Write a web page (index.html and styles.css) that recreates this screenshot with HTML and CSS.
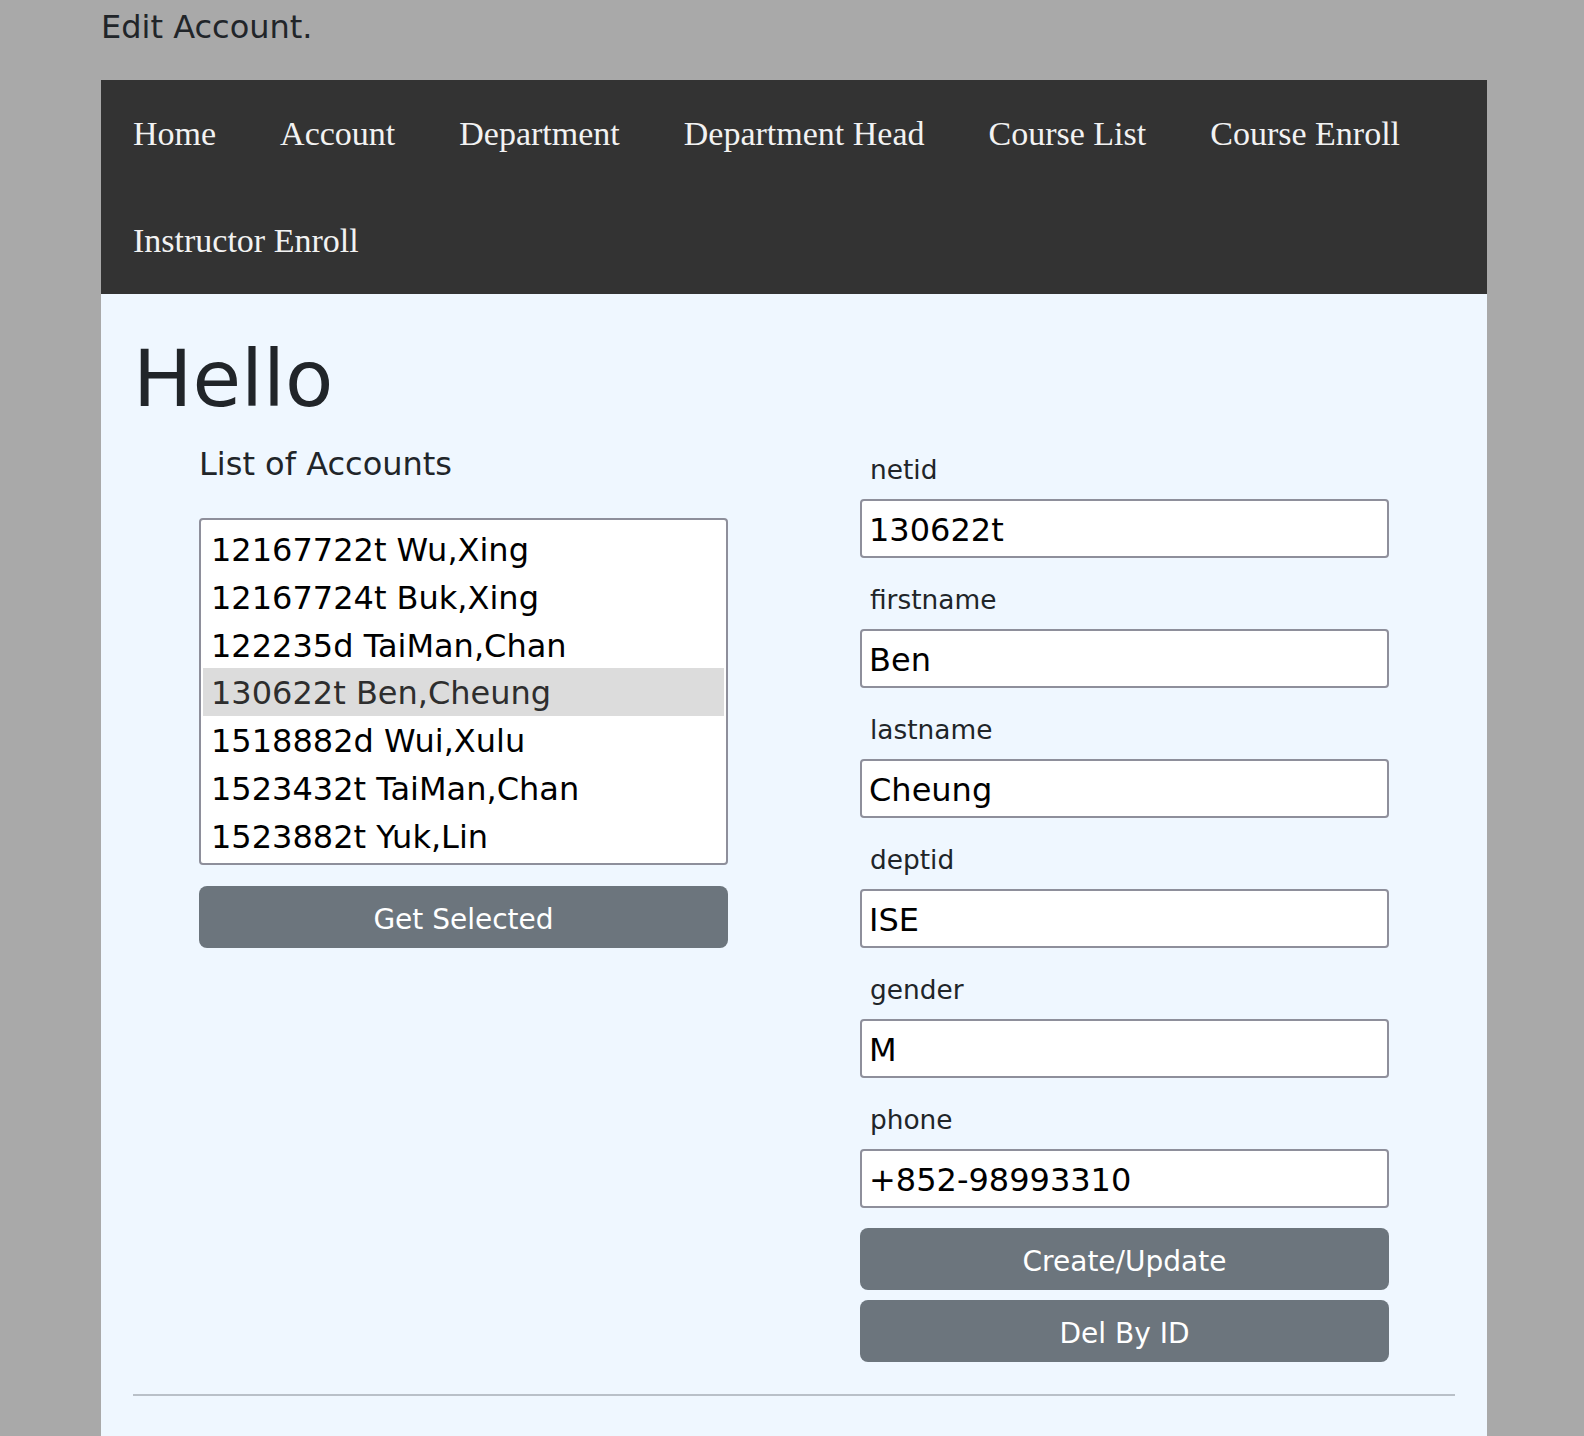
FILE: index.html
```html
<!DOCTYPE html>
<html lang="en">
<head>
<meta charset="utf-8">
<title>Edit Account</title>
<link rel="stylesheet" href="styles.css">
</head>
<body>
<div class="page">
  <p class="title">Edit Account.</p>
  <div class="frame">
    <nav class="topnav">
      <a href="#">Home</a>
      <a href="#">Account</a>
      <a href="#">Department</a>
      <a href="#">Department Head</a>
      <a href="#">Course List</a>
      <a href="#">Course Enroll</a>
      <a href="#">Instructor Enroll</a>
    </nav>
    <main class="content">
      <h1 class="hello">Hello</h1>
      <div class="cols">
        <section class="col">
          <div class="inner">
            <div class="list-title">List of Accounts</div>
            <div class="listbox" role="listbox">
              <div class="opt">12167722t Wu,Xing</div>
              <div class="opt">12167724t Buk,Xing</div>
              <div class="opt">122235d TaiMan,Chan</div>
              <div class="opt selected">130622t Ben,Cheung</div>
              <div class="opt">1518882d Wui,Xulu</div>
              <div class="opt">1523432t TaiMan,Chan</div>
              <div class="opt">1523882t Yuk,Lin</div>
            </div>
            <button class="btn btn-get" type="button">Get Selected</button>
          </div>
        </section>
        <section class="col col-form">
          <form class="inner">
            <div class="group">
              <label class="lbl" for="netid">netid</label>
              <input class="field" id="netid" type="text" value="130622t">
            </div>
            <div class="group">
              <label class="lbl" for="firstname">firstname</label>
              <input class="field" id="firstname" type="text" value="Ben">
            </div>
            <div class="group">
              <label class="lbl" for="lastname">lastname</label>
              <input class="field" id="lastname" type="text" value="Cheung">
            </div>
            <div class="group">
              <label class="lbl" for="deptid">deptid</label>
              <input class="field" id="deptid" type="text" value="ISE">
            </div>
            <div class="group">
              <label class="lbl" for="gender">gender</label>
              <input class="field" id="gender" type="text" value="M">
            </div>
            <div class="group">
              <label class="lbl" for="phone">phone</label>
              <input class="field" id="phone" type="text" value="+852-98993310">
            </div>
            <button class="btn" type="button">Create/Update</button>
            <button class="btn btn-del" type="button">Del By ID</button>
          </form>
        </section>
      </div>
      <hr class="rule">
    </main>
  </div>
</div>
</body>
</html>
```

FILE: styles.css
```css
* {
  box-sizing: border-box;
}

html, body {
  margin: 0;
  padding: 0;
}

body {
  background: #a9a9a9;
  font-family: Verdana, "DejaVu Sans", sans-serif;
  font-size: 32px;
  color: #212529;
  overflow: hidden;
}

.page {
  width: 1386px;
  margin-left: 101px;
}

.title {
  margin: 0;
  padding-top: 3px;
  line-height: 48px;
  font-size: 32px;
  color: #212529;
}

.frame {
  margin-top: 29px;
}

.topnav {
  background: #333333;
  display: flex;
  flex-wrap: wrap;
}

.topnav a {
  display: block;
  color: #f2f2f2;
  text-decoration: none;
  font-family: "Liberation Serif", "Times New Roman", serif;
  font-size: 34px;
  line-height: 51px;
  padding: 28px 32px;
}

.content {
  background: #eff7ff;
  padding: 37px 32px 200px;
}

.hello {
  margin: 0;
  font-size: 79px;
  line-height: 96px;
  font-weight: 400;
  color: #212529;
}

.cols {
  margin-top: 19px;
  display: grid;
  grid-template-columns: 1fr 1fr;
  align-items: start;
}

.inner {
  width: 529px;
  margin: 0 auto;
  display: flex;
  flex-direction: column;
}

.list-title {
  font-size: 32px;
  line-height: 36px;
  color: #212529;
}

.listbox {
  margin-top: 36px;
  background: #ffffff;
  border: 2px solid #8e8f9b;
  border-radius: 4px;
  padding: 5px 2px 3px;
}

.opt {
  height: 47.8px;
  line-height: 47.8px;
  padding-top: 2px;
  padding-left: 8px;
  font-size: 32px;
  color: #000000;
  white-space: nowrap;
}

.opt.selected {
  background: #dcdcdc;
  color: #2e2e2e;
}

.btn {
  display: block;
  width: 100%;
  height: 62px;
  border: none;
  border-radius: 8px;
  background: #6c757d;
  color: #ffffff;
  font-family: Verdana, "DejaVu Sans", sans-serif;
  font-size: 28px;
  line-height: 56px;
  padding: 6px 0 0;
  text-align: center;
  cursor: pointer;
}

.btn-get {
  margin-top: 21px;
}

.btn-del {
  margin-top: 10px;
}

.col-form {
  padding-top: 2px;
}

.group {
  display: flex;
  flex-direction: column;
  margin-bottom: 20px;
}

.lbl {
  display: block;
  padding-top: 2px;
  padding-left: 10px;
  margin-bottom: 9px;
  font-size: 26.4px;
  line-height: 40px;
  color: #212529;
}

.field {
  display: block;
  width: 100%;
  height: 59px;
  border: 2px solid #8e8f9b;
  border-radius: 4px;
  background: #ffffff;
  padding: 2px 7px 0;
  font-family: Verdana, "DejaVu Sans", sans-serif;
  font-size: 32px;
  color: #000000;
  outline: none;
}

.rule {
  margin: 32px 0 0;
  border: 0;
  border-top: 2px solid #b9c0c8;
  height: 0;
}
```
